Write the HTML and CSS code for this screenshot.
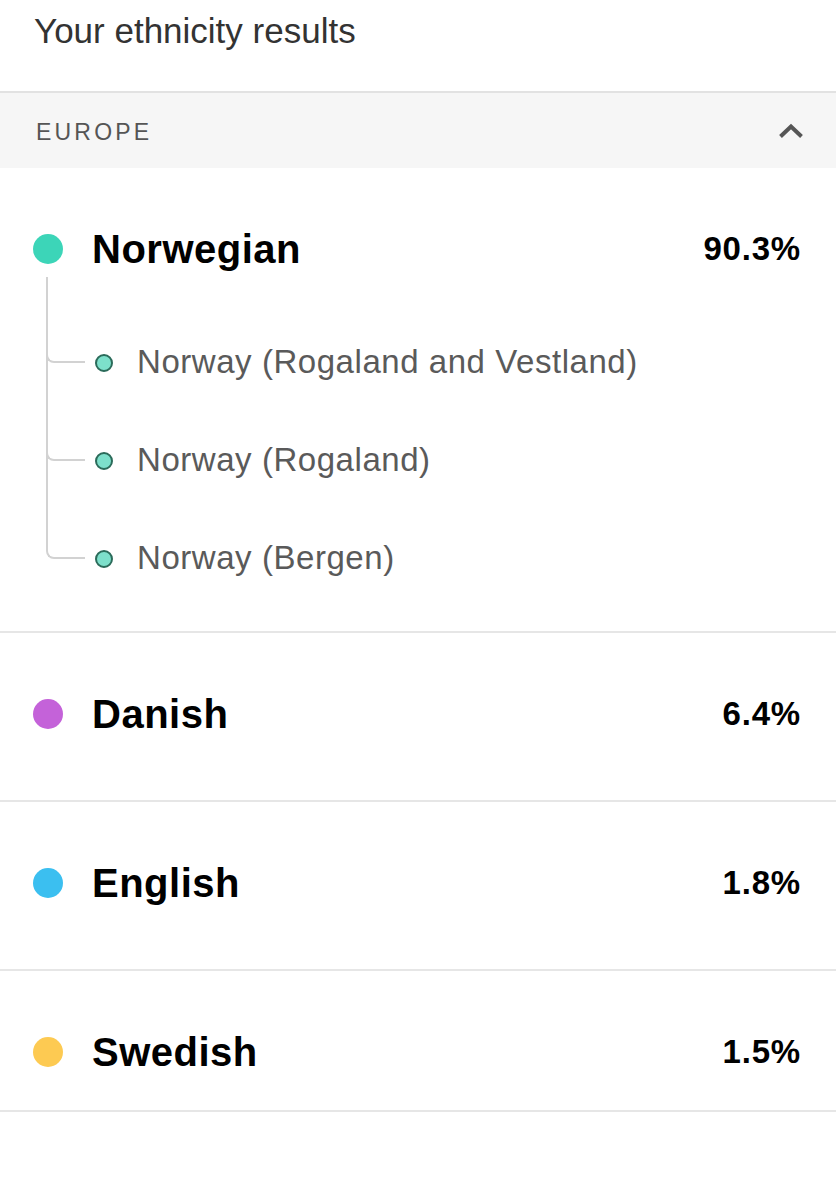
FILE: index.html
```html
<!DOCTYPE html>
<html lang="en">
<head>
<meta charset="utf-8">
<title>Your ethnicity results</title>
<link rel="stylesheet" href="styles.css">
</head>
<body>
<div class="page">
  <div class="title">Your ethnicity results</div>
  <div class="region">
    <span class="region-name">EUROPE</span>
    <svg class="chevron" width="26" height="16" viewBox="0 0 26 16"><polyline points="2.5,13.5 13,3.5 23.5,13.5" fill="none" stroke="#565656" stroke-width="4"/></svg>
  </div>

  <div class="group group-first">
    <div class="main">
      <span class="dot dot-teal"></span>
      <span class="name">Norwegian</span>
      <span class="pct">90.3%</span>
    </div>
    <ul class="tree">
      <li class="sub"><span class="subdot"></span><span class="subname">Norway (Rogaland and Vestland)</span></li>
      <li class="sub"><span class="subdot"></span><span class="subname">Norway (Rogaland)</span></li>
      <li class="sub"><span class="subdot"></span><span class="subname">Norway (Bergen)</span></li>
    </ul>
  </div>

  <div class="group">
    <div class="main">
      <span class="dot dot-purple"></span>
      <span class="name">Danish</span>
      <span class="pct">6.4%</span>
    </div>
  </div>

  <div class="group">
    <div class="main">
      <span class="dot dot-blue"></span>
      <span class="name">English</span>
      <span class="pct">1.8%</span>
    </div>
  </div>

  <div class="group group-last">
    <div class="main">
      <span class="dot dot-yellow"></span>
      <span class="name">Swedish</span>
      <span class="pct">1.5%</span>
    </div>
  </div>
</div>
</body>
</html>
```

FILE: styles.css
```css
html, body {
  margin: 0;
  padding: 0;
  background: #ffffff;
}

.page {
  width: 836px;
  font-family: "Liberation Sans", Arial, Helvetica, sans-serif;
}

.title {
  height: 40px;
  padding: 11px 0 40px 34px;
  font-size: 35px;
  line-height: 40px;
  color: #333333;
  border-bottom: 2px solid #e2e2e2;
}

.region {
  height: 75px;
  background: #f6f6f6;
  display: flex;
  align-items: center;
  justify-content: space-between;
  padding: 0 32px 0 36px;
}

.region-name {
  font-size: 23px;
  letter-spacing: 3.2px;
  color: #555555;
  line-height: 30px;
  padding-top: 2px;
}

.chevron {
  display: block;
}

.group {
  border-bottom: 2px solid #e6e6e6;
  padding: 56px 0 61px 0;
}

.group-first {
  padding-bottom: 24px;
}

.group-last {
  padding-bottom: 33px;
}

.main {
  height: 50px;
  display: flex;
  align-items: center;
  padding: 0 35px 0 33px;
}

.dot {
  width: 30px;
  height: 30px;
  border-radius: 50%;
  flex: none;
  margin-right: 29px;
}

.dot-teal { background: #3cd5b8; }
.dot-purple { background: #c462d9; }
.dot-blue { background: #3bbff0; }
.dot-yellow { background: #fdca52; }

.name {
  font-size: 40px;
  font-weight: bold;
  letter-spacing: 0.5px;
  color: #000000;
  line-height: 50px;
  flex: 1;
}

.pct {
  font-size: 33px;
  font-weight: bold;
  letter-spacing: 0.8px;
  color: #000000;
  line-height: 50px;
}

.tree {
  list-style: none;
  margin: 39px 0 0 46px;
  padding: 0;
}

.sub {
  position: relative;
  height: 98px;
  display: flex;
  align-items: center;
  padding-left: 49px;
}

.sub::before {
  content: "";
  position: absolute;
  left: 0;
  top: 0;
  width: 39px;
  height: 50px;
  box-sizing: border-box;
  border-left: 2px solid #d2d2d2;
  border-bottom: 2px solid #d2d2d2;
  border-bottom-left-radius: 8px;
}

.sub:first-child::before {
  top: -36px;
  height: 86px;
}

.sub:not(:last-child)::after {
  content: "";
  position: absolute;
  left: 0;
  top: 40px;
  bottom: 0;
  border-left: 2px solid #d2d2d2;
}

.subdot {
  width: 18px;
  height: 18px;
  box-sizing: border-box;
  border-radius: 50%;
  background: #7de0cb;
  border: 2px solid #2b6b5a;
  flex: none;
  margin-right: 24px;
  margin-top: 2px;
}

.subname {
  font-size: 33px;
  letter-spacing: 0.55px;
  color: #5a5a5a;
  line-height: 40px;
}
```
